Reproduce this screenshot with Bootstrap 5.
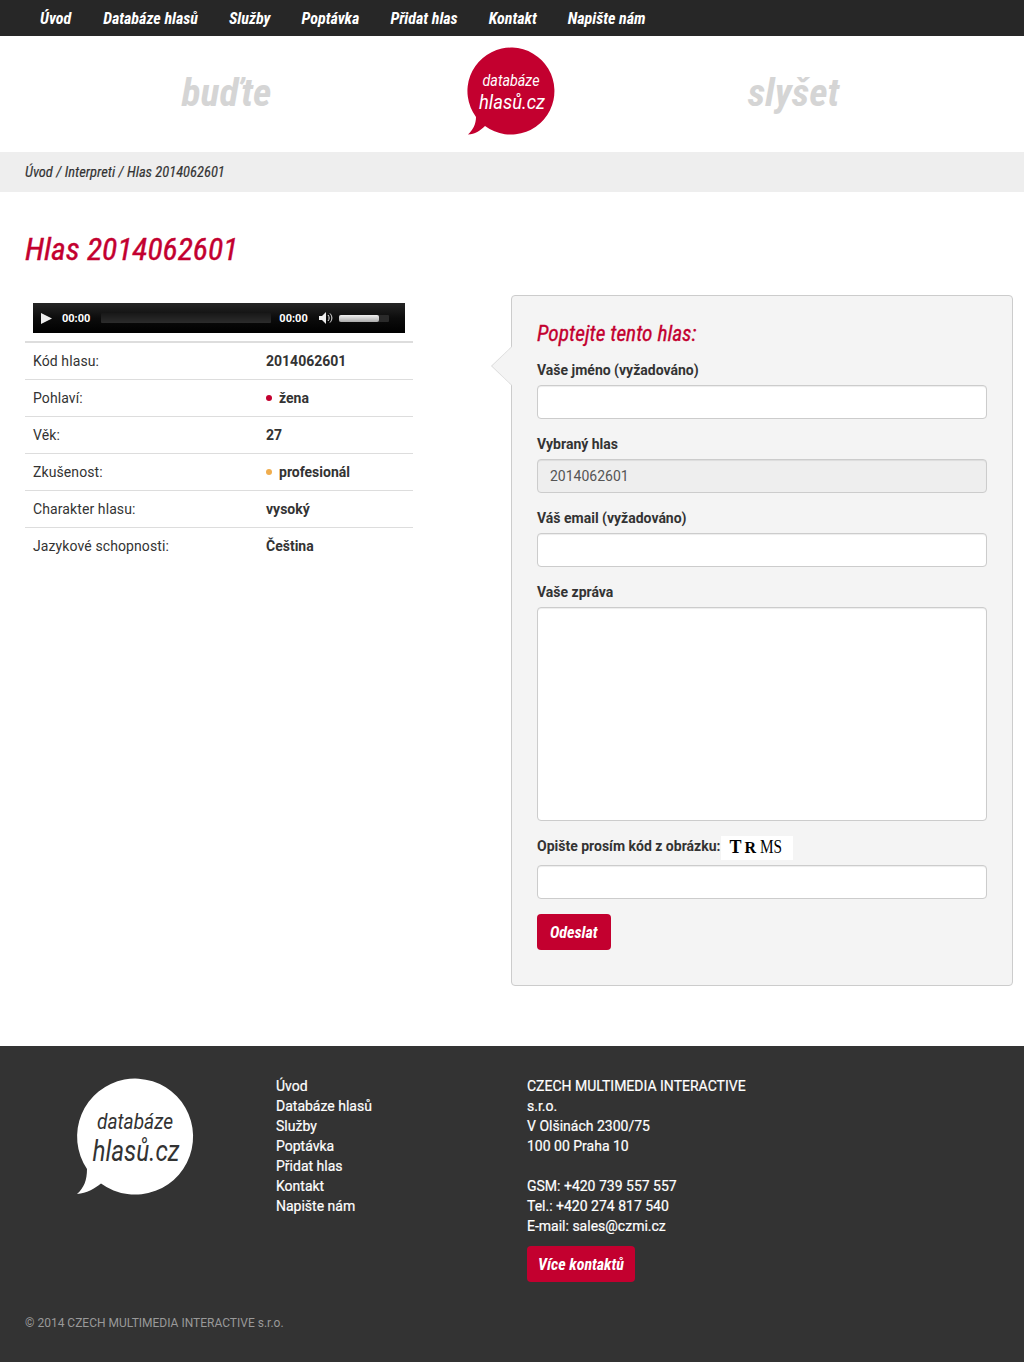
<!DOCTYPE html>
<html lang="cs"><head><meta charset="utf-8"><title>Hlas 2014062601</title>
<link href="https://cdn.jsdelivr.net/npm/bootstrap@5.3.0/dist/css/bootstrap.min.css" rel="stylesheet">
<style>
body{font-family:Roboto,"Liberation Sans",sans-serif;font-size:14px;color:#333;background:#fff;line-height:20px}
.cond{font-family:"Roboto Condensed","Liberation Sans Narrow",Roboto,sans-serif;font-stretch:75%;font-style:italic}
.topbar{height:36px;background:#272727;padding-left:40px;gap:31px}
.topbar a{color:#fff;font-weight:700;font-size:16px;line-height:37px;letter-spacing:.01px;text-decoration:none}
.topbar a:first-child{margin-right:1px}
.head{height:116px;padding-right:4px}
.slogan{font-size:39.500px;font-weight:700;color:#d5d5d5;line-height:48px;width:285px;margin-bottom:2px}
.logo-top{margin:0 96px 6px 98px}
.crumb{height:40px;background:#eee;padding-left:25px;line-height:42px;font-size:14.500px;-webkit-text-stroke:.15px #333}
.pagewrap{padding:0 11px 60px 25px;gap:98px}
.ttl{font-size:31.600px;color:#c3002f;margin:39px 0 26px 25px;line-height:38px;font-weight:400;-webkit-text-stroke:.4px #c3002f}
.leftcol{width:388px}
.player{height:30px;margin:8px;background:linear-gradient(#252525,#0c0c0c 50%,#000);color:#fff;font-size:11px;font-weight:700;padding-left:8px}
.tm{padding-top:1px}
.play-ic{margin-right:10px}
.track{height:10px;width:170px;margin:0 8px 0 11px;background:linear-gradient(#181818,#2c2c2c);border-radius:1px}
.spk{margin:0 5px 0 11px}
.vol{height:7px;width:50px;background:#2a2a2a;border-radius:1px}
.vol span{display:block;height:100%;width:40px;background:linear-gradient(#f0f0f0,#aaa);border-radius:2px}
.facts{margin:0;width:100%;border-top:2px solid #ddd}
.facts td{padding:8px;height:37px;border-bottom:1px solid #ddd;font-size:14px;line-height:20px}
.facts tr:last-child td{border-bottom:0}
.facts td:first-child{width:233px;letter-spacing:.1px}
.facts td:last-child{font-weight:700}
.dot{display:inline-block;width:6px;height:6px;border-radius:50%;margin-right:7px;vertical-align:2px}
.panel{width:502px;height:691px;background:#f4f4f4;border:1px solid #ccc;border-radius:4px;padding:25px;position:relative}
.panel::before,.panel::after{content:"";position:absolute;top:50px;height:40px;clip-path:polygon(100% 0,0 50%,100% 100%)}
.panel::before{left:-21px;width:21px;background:#d8d8d8}
.panel::after{left:-20px;width:21px;background:#f4f4f4}
.panel h2{font-size:21.400px;color:#c3002f;font-weight:400;margin:0 0 13px;line-height:26px;-webkit-text-stroke:.3px #c3002f}
.panel label{display:block;font-weight:700;margin-bottom:5px;line-height:20px;font-size:14px}
.panel .form-control{height:34px;border-color:#ccc;border-radius:4px;margin-bottom:15px;font-size:14px;padding:6px 12px;box-shadow:inset 0 1px 1px rgba(0,0,0,.075)}
.panel textarea.form-control{height:214px;margin-bottom:14px;resize:none}
.panel .form-control:disabled{background:#eee;color:#555}
.captcha-row{margin-bottom:6px!important}
.captcha{display:inline-block;background:#fff;width:72px;height:24px;font-family:"Liberation Serif",serif;color:#000;font-size:17px;line-height:22px;padding-left:8px;margin-left:1px;font-weight:400;vertical-align:middle;transform:translateY(1px)}
.captcha b{font-size:18px;margin-right:3px}
.captcha b+b{font-size:16px;margin-right:2px}
.captcha i{font-style:normal;font-size:18px;display:inline-block;transform:scaleX(.85);transform-origin:left;margin-left:2px}
.btn-red{background:#c3002f;color:#fff;font-weight:700;font-size:16px;border:0;border-radius:4px;height:36px;padding:1px 13px 0;line-height:35px}
.btn-tight{padding:1px 11px 0}
.btn-slot{margin-top:10px}
.foot{height:316px;background:#333;color:#fff;padding-top:30px;position:relative}
.foot a{color:#fff;text-decoration:none}
.foot .lnk{line-height:20px;font-size:14px;-webkit-text-stroke:.2px #fff}
.foot .btn-red{-webkit-text-stroke:0}
.foot-logo{margin:3px 0 0 77px;overflow:visible}
.foot-links{margin-left:83px;width:251px}
.foot-addr{width:225px}
.copy{position:absolute;left:25px;top:267px;font-size:12px;color:#999}
</style></head><body>
<nav class="topbar d-flex">
<a class="cond" href="#">Úvod</a><a class="cond" href="#">Databáze hlasů</a><a class="cond" href="#">Služby</a><a class="cond" href="#">Poptávka</a><a class="cond" href="#">Přidat hlas</a><a class="cond" href="#">Kontakt</a><a class="cond" href="#">Napište nám</a>
</nav>
<header class="head d-flex align-items-center justify-content-center">
<div class="slogan cond text-center">buďte</div>
<svg class="logo-top" width="88" height="88" viewBox="0 0 88 88"><path d="M9 70A43.500 43.500 0 1 1 18 79C13 84 8 87 1 87.500C6 83 9 77 9 70z" fill="#c3002f"/><text x="44" y="39" text-anchor="middle" fill="#fff" font-family="Roboto" font-style="italic" font-size="16" textLength="57" lengthAdjust="spacingAndGlyphs">databáze</text><text x="45" y="62" text-anchor="middle" fill="#fff" font-family="Roboto" font-style="italic" font-size="21" textLength="66" lengthAdjust="spacingAndGlyphs">hlasů.cz</text></svg>
<div class="slogan cond text-center">slyšet</div>
</header>
<div class="crumb"><span class="cond">Úvod / Interpreti / Hlas 2014062601</span></div>
<h1 class="ttl cond">Hlas 2014062601</h1>
<div class="pagewrap d-flex align-items-start">
<div class="leftcol">
<div class="player d-flex align-items-center">
<svg class="play-ic" width="11" height="11" viewBox="0 0 11 11"><path d="M0 0l11 5.500L0 11z" fill="#eee"/></svg>
<span class="tm">00:00</span><span class="track"></span><span class="tm">00:00</span>
<svg class="spk" width="15" height="12" viewBox="0 0 15 12"><path d="M0 4h3l4-4v12l-4-4H0z" fill="#eee"/><path d="M9 3c1.500 2 1.500 4 0 6M11 1.500c2.500 3 2.500 6 0 9" stroke="#eee" fill="none"/></svg>
<span class="vol"><span></span></span>
</div>
<table class="facts"><tbody>
<tr><td>Kód hlasu:</td><td>2014062601</td></tr>
<tr><td>Pohlaví:</td><td><span class="dot" style="background:#c3002f"></span>žena</td></tr>
<tr><td>Věk:</td><td>27</td></tr>
<tr><td>Zkušenost:</td><td><span class="dot" style="background:#f0ad4e"></span>profesionál</td></tr>
<tr><td>Charakter hlasu:</td><td>vysoký</td></tr>
<tr><td>Jazykové schopnosti:</td><td>Čeština</td></tr>
</tbody></table>
</div>
<form class="panel">
<h2 class="cond">Poptejte tento hlas:</h2>
<label>Vaše jméno (vyžadováno)</label><input class="form-control">
<label>Vybraný hlas</label><input class="form-control" disabled value="2014062601">
<label>Váš email (vyžadováno)</label><input class="form-control">
<label>Vaše zpráva</label><textarea class="form-control"></textarea>
<label class="captcha-row">Opište prosím kód z obrázku:<span class="captcha"><b>T</b><b>R</b><i>MS</i></span></label><input class="form-control">
<button type="button" class="btn-red cond">Odeslat</button>
</form>
</div>
<footer class="foot">
<div class="d-flex">
<svg class="foot-logo" width="116" height="116" viewBox="0 0 116 116"><path d="M10 90A58 58 0 1 1 24 104.500C17 110 10 114 0 115C7 109 10 101 10 90z" fill="#fff"/><text x="58" y="50" text-anchor="middle" fill="#333" font-family="Roboto" font-style="italic" font-size="22" textLength="76" lengthAdjust="spacingAndGlyphs">databáze</text><text x="59" y="82" text-anchor="middle" fill="#333" font-family="Roboto" font-style="italic" font-size="29" textLength="87" lengthAdjust="spacingAndGlyphs">hlasů.cz</text></svg>
<div class="lnk foot-links d-flex flex-column"><a href="#">Úvod</a><a href="#">Databáze hlasů</a><a href="#">Služby</a><a href="#">Poptávka</a><a href="#">Přidat hlas</a><a href="#">Kontakt</a><a href="#">Napište nám</a></div>
<div class="lnk foot-addr">CZECH MULTIMEDIA INTERACTIVE s.r.o.<br>V Olšinách 2300/75<br>100 00 Praha 10<br><br>GSM: +420 739 557 557<br>Tel.: +420 274 817 540<br>E-mail: sales@czmi.cz
<div class="btn-slot"><button type="button" class="btn-red btn-tight cond">Více kontaktů</button></div></div>
</div>
<div class="copy">© 2014 CZECH MULTIMEDIA INTERACTIVE s.r.o.</div>
</footer>
</body></html>
